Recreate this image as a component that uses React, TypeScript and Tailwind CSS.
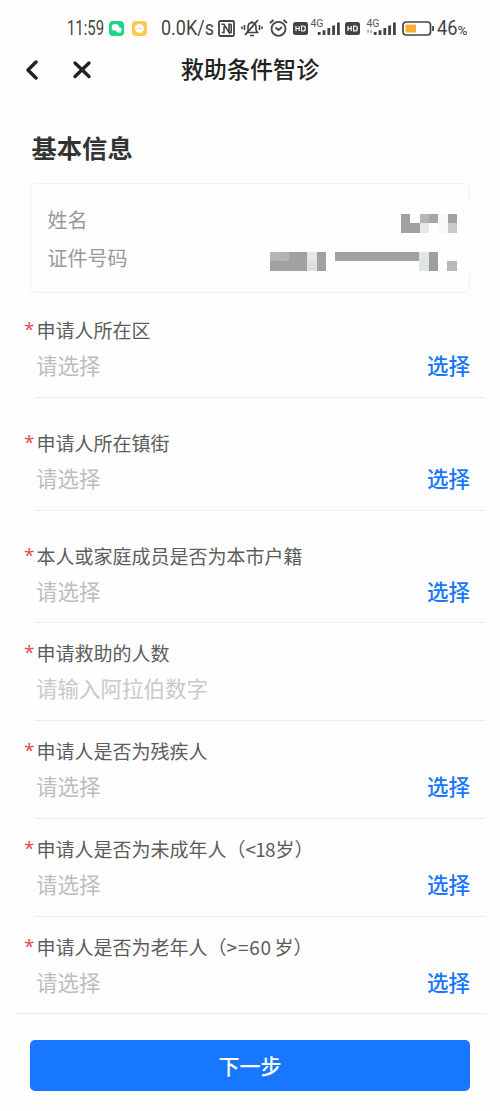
import React from "react";

type Field = {
  label: string;
  range?: { text: string; className: string };
  placeholder: string;
  select: boolean;
  spaced?: boolean;
};

const fields: Field[] = [
  { label: "申请人所在区", placeholder: "请选择", select: true, spaced: true },
  { label: "申请人所在镇街", placeholder: "请选择", select: true, spaced: true },
  { label: "本人或家庭成员是否为本市户籍", placeholder: "请选择", select: true },
  { label: "申请救助的人数", placeholder: "请输入阿拉伯数字", select: false },
  { label: "申请人是否为残疾人", placeholder: "请选择", select: true },
  {
    label: "申请人是否为未成年人",
    range: { text: "<18", className: "w-[30px] tracking-[-0.8px]" },
    placeholder: "请选择",
    select: true,
  },
  {
    label: "申请人是否为老年人",
    range: { text: ">=60", className: "w-[48px] tracking-[0.8px]" },
    placeholder: "请选择",
    select: true,
  },
];

const nameMask = [
  ["#a1a1a1", "#fefefe", "#b6b6b6", "#a3a7a3", "#f8f8f8", "#a1a1a1"],
  ["#a1a1a1", "#a1a1a1", "#e8e8e8", "#fefefe", "#f8f8f8", "#c9c9c9"],
];

const W = "#fefefe";
const G = "#a1a1a1";
const idMask = [
  ["#b6b6b6", "#b3b3b3", G, G, "#e6e8e7", G, W, G, G, G, G, G, G, G, G, G, "#e1e7e5", "#9b9f9d", W, W],
  [G, G, G, G, "#e0e0e0", G, W, W, W, W, W, W, W, W, W, W, "#e0e5e3", "#9b9f9d", W, "#b9b9b9"],
];

function Mosaic({ rows }: { rows: string[][] }) {
  const w = rows[0].length;
  return (
    <svg width={w * 9.33} height={18.7} viewBox={`0 0 ${w} 2`} preserveAspectRatio="none" shapeRendering="crispEdges">
      {rows.map((r, y) => r.map((c, x) => <rect key={`${x}-${y}`} x={x} y={y} width="1" height="1" fill={c} />))}
    </svg>
  );
}

function Hd({ className }: { className: string }) {
  return (
    <svg className={className} width="15" height="13" viewBox="0 0 15 13">
      <rect width="15" height="13" rx="2.5" fill="#444" />
      <path d="M3 4v5M6.2 4v5M3 6.5h3.2M8.6 4v5h1.6q2 0 2-2v-1q0-2-2-2z" fill="none" stroke="#fff" strokeWidth="1.2" />
    </svg>
  );
}

function Signal({ className, arrows }: { className: string; arrows?: boolean }) {
  return (
    <svg className={className} width="31" height="20" viewBox="0 0 31 20">
      <text x="0.5" y="8.5" fontSize="10" textLength="13" lengthAdjust="spacingAndGlyphs" fill="#555">
        4G
      </text>
      {arrows && <path d="M2 11.5v4M.5 13h3M5 11.5v4M3.8 14h2.8" stroke="#999" strokeWidth=".8" />}
      <path d="M9.200 14v3M14 12.200V17M18.800 10v7M23.600 7.400V17M28.400 4.500V17" stroke="#444" strokeWidth="2.800" />
    </svg>
  );
}

function StatusBar() {
  return (
    <div className="flex h-[45px] items-center pt-[11px] pl-[66px] font-['Roboto','Noto_Sans',sans-serif] text-[#444]">
      <svg className="overflow-visible" width="40" height="26" viewBox="0 0 40 26">
        <text x="1" y="19.5" fontSize="19.5" fill="#444" textLength="37" lengthAdjust="spacingAndGlyphs">11:59</text>
      </svg>
      <svg className="ml-[3px]" width="15" height="15" viewBox="0 0 15 15">
        <rect width="15" height="15" rx="4" fill="#1fd583" />
        <ellipse cx="6.3" cy="6.2" rx="3.6" ry="3.1" fill="#fff" />
        <ellipse cx="9.7" cy="8.8" rx="3" ry="2.6" fill="#fff" />
        <path d="m4 8-.6 2 2-1zM11 10.5l.9 1.4-2.2-.8z" fill="#fff" />
      </svg>
      <svg className="ml-[8px]" width="15" height="15" viewBox="0 0 15 15">
        <rect width="15" height="15" rx="4" fill="#fbc94c" />
        <circle cx="7.5" cy="7.4" r="4.5" fill="#fff" />
        <path d="M5 7.5h5" stroke="#fbc94c" strokeWidth="1" strokeDasharray="1 1" />
      </svg>
      <svg className="ml-[13px] overflow-visible" width="56" height="26" viewBox="0 0 56 26">
        <text x="1" y="19.5" fontSize="19.5" fill="#444" textLength="53" lengthAdjust="spacingAndGlyphs">0.0K/s</text>
      </svg>
      <svg className="ml-[2px]" width="17" height="17" viewBox="0 0 17 17" fill="none" stroke="#444" strokeWidth="1.8">
        <rect x="1" y="1" width="15" height="15" rx="1.5" />
        <path d="M3.500 4.300H6l5 8V4.300h2.200M6 6.500v6H3.800M13.200 4.300v8.200H11" strokeWidth="1.600" />
      </svg>
      <svg className="ml-[6px]" width="22" height="18" viewBox="0 0 22 18" fill="none" stroke="#444" strokeWidth="1.6">
        <path d="M7 13V8q0-4 4-4.500Q15 4 15 8v3l1.500 2.500H5.500zM11 2v1.500M9 16.500h4" />
        <path d="M17 1 4 16" strokeWidth="1.800" />
        <path d="M3.500 6v5M1 7.500v2.500M18.500 6v5M21 7.500v2.500" />
      </svg>
      <svg className="ml-[6px]" width="19" height="18" viewBox="0 0 19 18" fill="none" stroke="#444" strokeWidth="1.800">
        <circle cx="9.500" cy="9.800" r="7" />
        <path d="M1 4 4.500 1M18 4l-3.500-3M6.500 8.500l3 2.500 3.500-3" />
      </svg>
      <Hd className="ml-[5px]" />
      <Signal className="ml-[2px]" />
      <Hd className="ml-[4px]" />
      <Signal className="ml-[6px]" arrows />
      <svg className="ml-[5px]" width="33" height="15" viewBox="0 0 33 15">
        <rect x="1" y="1" width="27.500" height="13" rx="3" fill="#fff" stroke="#444" strokeWidth="1.700" />
        <rect x="3.500" y="3.500" width="10.500" height="8" rx="1" fill="#fbae35" />
        <path d="M31 5v5" stroke="#444" strokeWidth="1.800" />
      </svg>
      <svg className="ml-[1px] overflow-visible" width="33" height="26" viewBox="0 0 33 26">
        <text x="1" y="19.5" fontSize="19.500" fill="#444" textLength="20.500" lengthAdjust="spacingAndGlyphs">46</text>
        <text x="21.500" y="19.5" fontSize="12.500" fill="#444" textLength="10" lengthAdjust="spacingAndGlyphs">%</text>
      </svg>
    </div>
  );
}

function FieldRow({ field }: { field: Field }) {
  return (
    <div className={field.spaced ? "mb-[15px]" : ""}>
      <div className="ml-[25px] flex h-[97.750px] w-[460px] flex-col pt-[16px]">
        <div className="flex h-[28px] items-center text-[19px] leading-[28px] whitespace-nowrap text-[#5c5c5c]">
          <span className="-ml-px h-[28px] w-[12.500px] font-['Open_Sans',sans-serif] text-[19px] leading-[27px] text-[#ed4251]">*</span>
          <span>{field.label}</span>
          {field.range && (
            <>
              <span>（</span>
              <span className={field.range.className}>{field.range.text}</span>
              <span>岁）</span>
            </>
          )}
        </div>
        <div className="ml-[10px] flex flex-1 justify-between border-b border-[#ededed] pt-[5px] pr-[15px] pl-px text-[21.500px] leading-[32px]">
          <span className={field.select ? "text-[#bdbdbd]" : "text-[#c9c9c9]"}>{field.placeholder}</span>
          {field.select && <button className="h-[32px] font-medium text-[#1877fb]">选择</button>}
        </div>
      </div>
    </div>
  );
}

export default function App() {
  return (
    <div className="flex h-[1111px] w-[500px] flex-col overflow-hidden bg-[#fefefe] font-['Noto_Sans_CJK_SC',sans-serif]">
      <StatusBar />
      <header className="grid h-[48px] grid-cols-[1fr_auto_1fr] items-center text-[#222]">
        <div className="flex items-center pt-[2px] pl-[25px]">
          <svg width="14" height="20" viewBox="0 0 14 20" fill="none" stroke="#222" strokeWidth="3.400" strokeLinecap="round" strokeLinejoin="round">
            <path d="M11 2 3 10l8 8" />
          </svg>
          <svg className="ml-[33px]" width="20" height="20" viewBox="0 0 20 20" fill="none" stroke="#222" strokeWidth="3.400" strokeLinecap="round">
            <path d="m3 3 14 13.500M17 3 3 16.500" />
          </svg>
        </div>
        <h1 className="-mt-[2px] text-[23.100px] leading-[34px] font-medium">救助条件智诊</h1>
      </header>
      <h2 className="mt-[35px] ml-[31.500px] h-[38px] text-[25.300px] leading-[38px] font-bold text-[#333]">基本信息</h2>
      <section className="relative mt-[17px] ml-[30px] h-[110px] w-[440px] shrink-0 rounded-[5px] border border-[#f3f3f3] px-[12px] pt-[17px] text-[20px] text-[#999]">
        <div className="flex h-[38px] justify-between pl-[4.500px]">
          <span className="leading-[38px]">姓名</span>
          <span className="pt-[13px]"><Mosaic rows={nameMask} /></span>
        </div>
        <div className="flex h-[38px] justify-between pl-[4.500px]">
          <span className="leading-[38px]">证件号码</span>
          <span className="pt-[13px]"><Mosaic rows={idMask} /></span>
        </div>
        <span className="absolute top-[16px] -right-[1px] h-[73px] w-[2px] bg-[#fefefe]" />
      </section>
      <main className="mt-[7px]">
        {fields.map((f) => (
          <FieldRow key={f.label} field={f} />
        ))}
      </main>
      <footer className="mx-[15px] -mt-px border-t border-[#eaeaea] px-[15px] pt-[26px]">
        <button className="h-[51px] w-full rounded-[5px] bg-[#1877ff] text-[21px] font-medium text-white">下一步</button>
      </footer>
    </div>
  );
}
